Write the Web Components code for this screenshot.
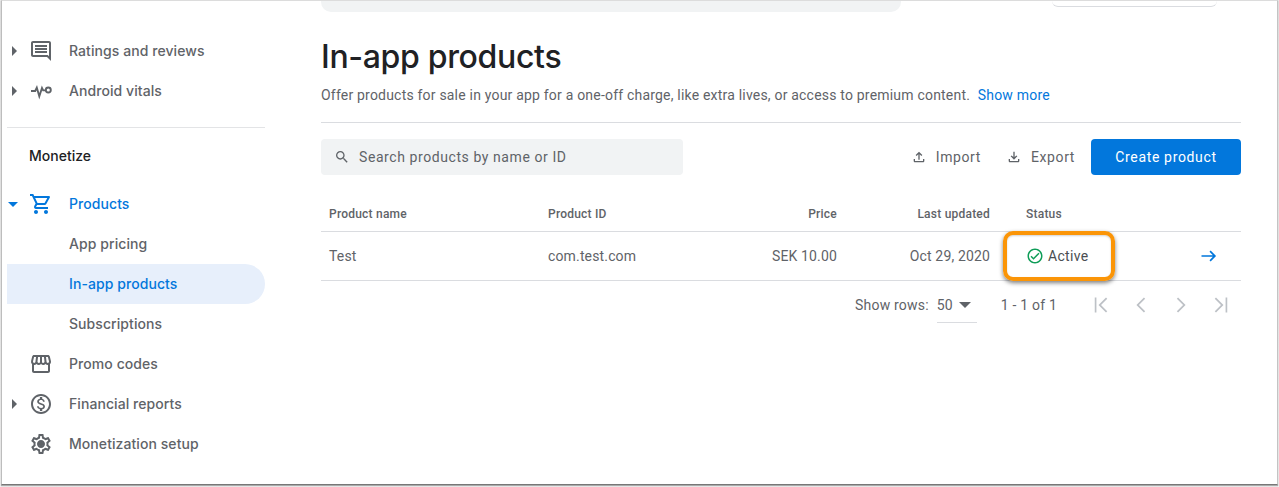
<!DOCTYPE html>
<html>
<head>
<meta charset="utf-8">
<title>In-app products</title>
<style>
    html, body { margin: 0; padding: 0; background: #fff; }
    body { width: 1279px; height: 487px; overflow: hidden; font-family: Roboto, "Liberation Sans", sans-serif; }
</style>
</head>
<body>
<app-window>
    <side-nav slot="nav">
        <nav-item caret="right" icon="comment">Ratings and reviews</nav-item>
        <nav-item caret="right" icon="vitals">Android vitals</nav-item>
        <nav-divider></nav-divider>
        <nav-heading>Monetize</nav-heading>
        <nav-item caret="down" icon="cart" active>Products</nav-item>
        <nav-item>App pricing</nav-item>
        <nav-item active selected>In-app products</nav-item>
        <nav-item>Subscriptions</nav-item>
        <nav-item icon="store">Promo codes</nav-item>
        <nav-item caret="right" icon="dollar">Financial reports</nav-item>
        <nav-item icon="gear">Monetization setup</nav-item>
    </side-nav>
    <products-page slot="main"></products-page>
</app-window>

<script>
// Iconos material, todos en una caja de 24x24
const ICONS = {
    comment: '<path d="M21.99 4c0-1.1-.89-2-1.99-2H4c-1.1 0-2 .9-2 2v12c0 1.1.9 2 2 2h14l4 4-.01-18zM20 4v13.17L18.83 16H4V4h16zM6 12h12v2H6zm0-3h12v2H6zm0-3h12v2H6z"/>',
    vitals: '<path d="M2 12h4.200l1.600-3.400 2.500 8.600 2.700-8.200 1.200 2.400h2" fill="none" stroke="currentColor" stroke-width="1.900"/><circle cx="19.300" cy="11" r="2.500" fill="none" stroke="currentColor" stroke-width="1.900"/>',
    cart: '<path d="M15.55 13c.75 0 1.41-.41 1.75-1.03l3.58-6.49c.37-.66-.11-1.48-.87-1.48H5.21l-.94-2H1v2h2l3.6 7.59-1.35 2.44C4.52 15.37 5.48 17 7 17h12v-2H7l1.1-2h7.45zM6.16 6h12.15l-2.76 5H8.53L6.16 6zM7 18c-1.1 0-1.99.9-1.99 2S5.9 22 7 22s2-.9 2-2-.9-2-2-2zm10 0c-1.1 0-1.99.9-1.99 2s.89 2 1.99 2 2-.9 2-2-.9-2-2-2z"/>',
    store: '<path d="M21.9 8.89l-1.05-4.37c-.22-.9-1-1.52-1.91-1.52H5.05c-.9 0-1.69.63-1.9 1.52L2.1 8.89c-.24 1.02-.02 2.06.62 2.88.08.11.19.19.28.29V19c0 1.1.9 2 2 2h14c1.1 0 2-.9 2-2v-6.94c.09-.09.2-.18.28-.28.64-.82.87-1.87.62-2.89zm-2.99-3.9l1.05 4.37c.1.42.01.84-.25 1.17-.14.18-.44.47-.94.47-.61 0-1.14-.49-1.21-1.14L16.98 5l1.93-.01zM13 5h1.96l.54 4.52c.05.39-.07.78-.33 1.07-.22.26-.54.41-.95.41-.67 0-1.22-.59-1.22-1.31V5zM8.49 9.52L9.04 5H11v4.69c0 .72-.55 1.31-1.29 1.31-.34 0-.65-.15-.89-.41-.25-.29-.37-.68-.33-1.07zm-4.45-.16L5.05 5h1.97l-.58 4.86c-.08.65-.6 1.14-1.21 1.14-.49 0-.8-.29-.93-.47-.27-.32-.36-.75-.26-1.17zM5 19v-6.03c.08.01.15.03.23.03.87 0 1.66-.36 2.24-.95.6.6 1.4.95 2.31.95.87 0 1.65-.36 2.23-.93.59.57 1.39.93 2.29.93.84 0 1.64-.35 2.24-.95.58.59 1.37.95 2.24.95.08 0 .15-.02.23-.03V19H5z"/>',
    dollar: '<path d="M12 2C6.48 2 2 6.48 2 12s4.48 10 10 10 10-4.48 10-10S17.52 2 12 2zm0 18c-4.41 0-8-3.59-8-8s3.59-8 8-8 8 3.59 8 8-3.59 8-8 8zm.31-8.86c-1.77-.45-2.34-.94-2.34-1.67 0-.84.79-1.43 2.1-1.43 1.38 0 1.9.66 1.94 1.64h1.71c-.05-1.34-.87-2.57-2.49-2.97V5H10.9v1.69c-1.51.32-2.72 1.3-2.72 2.81 0 1.79 1.49 2.69 3.66 3.21 1.95.46 2.34 1.15 2.34 1.87 0 .53-.39 1.39-2.1 1.39-1.6 0-2.23-.72-2.32-1.64H8.04c.1 1.7 1.36 2.66 2.86 2.97V19h2.34v-1.67c1.52-.29 2.72-1.16 2.73-2.77-.01-2.2-1.9-2.96-3.66-3.42z"/>',
    gear: '<path d="M19.43 12.98c.04-.32.07-.64.07-.98 0-.34-.03-.66-.07-.98l2.11-1.65c.19-.15.24-.42.12-.64l-2-3.46c-.09-.16-.26-.25-.44-.25-.06 0-.12.01-.17.03l-2.49 1c-.52-.4-1.08-.73-1.69-.98l-.38-2.65C14.46 2.18 14.25 2 14 2h-4c-.25 0-.46.18-.49.42l-.38 2.65c-.61.25-1.17.59-1.69.98l-2.49-1c-.06-.02-.12-.03-.18-.03-.17 0-.34.09-.43.25l-2 3.46c-.13.22-.07.49.12.64l2.11 1.65c-.04.32-.07.65-.07.98 0 .33.03.66.07.98l-2.11 1.65c-.19.15-.24.42-.12.64l2 3.46c.09.16.26.25.44.25.06 0 .12-.01.17-.03l2.49-1c.52.4 1.08.73 1.69.98l.38 2.65c.03.24.24.42.49.42h4c.25 0 .46-.18.49-.42l.38-2.65c.61-.25 1.17-.59 1.69-.98l2.49 1c.06.02.12.03.18.03.17 0 .34-.09.43-.25l2-3.46c.12-.22.07-.49-.12-.64l-2.11-1.65zm-1.98-1.71c.04.31.05.52.05.73 0 .21-.02.43-.05.73l-.14 1.13.89.7 1.08.84-.7 1.21-1.27-.51-1.04-.42-.9.68c-.43.32-.84.56-1.25.73l-1.06.43-.16 1.13-.2 1.35h-1.4l-.19-1.35-.16-1.13-1.06-.43c-.43-.18-.83-.41-1.23-.71l-.91-.7-1.06.43-1.27.51-.7-1.21 1.08-.84.89-.7-.14-1.13c-.03-.31-.05-.54-.05-.74s.02-.43.05-.73l.14-1.13-.89-.7-1.08-.84.7-1.21 1.27.51 1.04.42.9-.68c.43-.32.84-.56 1.25-.73l1.06-.43.16-1.13.2-1.35h1.39l.19 1.35.16 1.13 1.06.43c.43.18.83.41 1.23.71l.91.7 1.06-.43 1.27-.51.7 1.21-1.07.85-.89.7.14 1.13zM12 8c-2.21 0-4 1.79-4 4s1.79 4 4 4 4-1.79 4-4-1.79-4-4-4zm0 6c-1.1 0-2-.9-2-2s.9-2 2-2 2 .9 2 2-.9 2-2 2z"/><circle cx="12" cy="12" r="2.400"/>',
    search: '<path d="M15.5 14h-.79l-.28-.27C15.41 12.59 16 11.11 16 9.5 16 5.91 13.09 3 9.5 3S3 5.91 3 9.5 5.91 16 9.5 16c1.61 0 3.09-.59 4.23-1.57l.27.28v.79l5 4.99L20.49 19l-4.99-5zm-6 0C7.01 14 5 11.99 5 9.5S7.01 5 9.5 5 14 7.01 14 9.5 11.99 14 9.5 14z"/>',
    upload: '<path d="M18 15v3H6v-3H4v3c0 1.1.9 2 2 2h12c1.1 0 2-.9 2-2v-3h-2zM7 9l1.41 1.41L11 7.83V16h2V7.83l2.59 2.58L17 9l-5-5-5 5z"/>',
    download: '<path d="M18 15v3H6v-3H4v3c0 1.1.9 2 2 2h12c1.1 0 2-.9 2-2v-3h-2zm-1-4l-1.41-1.41L13 12.17V4h-2v8.17L8.41 9.59 7 11l5 5 5-5z"/>',
    check: '<path d="M12 2C6.48 2 2 6.48 2 12s4.48 10 10 10 10-4.48 10-10S17.52 2 12 2zm0 18c-4.41 0-8-3.59-8-8s3.59-8 8-8 8 3.59 8 8-3.59 8-8 8zm4.59-12.42L10 14.17l-2.59-2.58L6 13l4 4 8-8-1.41-1.42z"/>',
    arrow: '<path d="M14 5.5l-1.41 1.41L16.67 11H3v2h13.67l-4.08 4.09L14 18.5l6.5-6.5z"/>',
    first: '<path d="M4.500 3h2v18h-2zM19.500 4.400L18 3l-9 9 9 9 1.500-1.400L12 12z"/>',
    prev: '<path d="M17 4.400L15.500 3l-9 9 9 9 1.500-1.400L9.500 12z"/>',
    next: '<path d="M7 4.400L8.500 3l9 9-9 9L7 19.600 14.500 12z"/>',
    last: '<path d="M17.500 3h2v18h-2zM4.500 4.400L6 3l9 9-9 9-1.500-1.400L12 12z"/>'
};

class UiIcon extends HTMLElement {
    constructor() {
        super();
        this.attachShadow({ mode: 'open' });
    }

    connectedCallback() {
        const size = this.getAttribute('size') || 24;
        const name = this.getAttribute('name');
        this.shadowRoot.innerHTML = `
            <style>
                :host { display: inline-flex; flex: none; width: ${size}px; height: ${size}px; }
                svg { display: block; width: 100%; height: 100%; fill: currentColor; }
            </style>
            <svg viewBox="0 0 24 24" aria-hidden="true">${ICONS[name] || ''}</svg>
        `;
    }
}

class AppWindow extends HTMLElement {
    constructor() {
        super();
        this.attachShadow({ mode: 'open' });
        this.shadowRoot.innerHTML = `
            <style>
                :host {
                    display: block;
                    box-sizing: border-box;
                    width: 1279px;
                    height: 487px;
                    padding: 0 1px 2px 1px;
                    background: linear-gradient(#e9e9e9, #f4f4f4);
                }
                .frame {
                    box-sizing: border-box;
                    height: 100%;
                    display: flex;
                    overflow: hidden;
                    background: #fff;
                    border-style: solid;
                    border-color: #dcdcdc #c4c4c4 #777 #bdbdbd;
                    border-width: 1px;
                    box-shadow: 0 1px 1px rgba(0, 0, 0, .3);
                }
            </style>
            <div class="frame">
                <slot name="nav"></slot>
                <slot name="main"></slot>
            </div>
        `;
    }
}

class SideNav extends HTMLElement {
    constructor() {
        super();
        this.attachShadow({ mode: 'open' });
        this.shadowRoot.innerHTML = `
            <style>
                :host {
                    display: block;
                    flex: none;
                    box-sizing: border-box;
                    width: 258px;
                    margin-left: 5px;
                    padding-top: 30px;
                }
            </style>
            <slot></slot>
        `;
    }
}

class NavItem extends HTMLElement {
    constructor() {
        super();
        this.attachShadow({ mode: 'open' });
    }

    connectedCallback() {
        const caret = this.getAttribute('caret');
        const icon = this.getAttribute('icon');
        const caretSvg = caret === 'down'
            ? '<svg class="down" width="10" height="5" viewBox="0 0 10 5"><path d="M0 0h10L5 5z"/></svg>'
            : caret === 'right'
                ? '<svg width="5" height="10" viewBox="0 0 5 10"><path d="M0 0l5 5-5 5z"/></svg>'
                : '';

        this.shadowRoot.innerHTML = `
            <style>
                :host {
                    display: flex;
                    align-items: center;
                    height: 40px;
                    color: #5f6368;
                    font: 500 14px/20px Inter, Roboto, sans-serif;
                    letter-spacing: .07px;
                    border-radius: 0 20px 20px 0;
                }
                :host([active]) { color: #0277dc; }
                :host([selected]) { background: #e7effb; }
                .caret {
                    flex: none;
                    display: flex;
                    align-items: center;
                    justify-content: center;
                    width: 14px;
                    color: #5f6368;
                }
                :host([active]) .caret { color: #0277dc; }
                .caret svg { display: block; fill: currentColor; }
                .caret .down { margin-left: -2px; }
                .icon {
                    flex: none;
                    display: flex;
                    justify-content: center;
                    width: 24px;
                    margin: 0 16px 0 8px;
                }
            </style>
            <span class="caret">${caretSvg}</span>
            <span class="icon">${icon ? `<ui-icon name="${icon}"></ui-icon>` : ''}</span>
            <slot></slot>
        `;
    }
}

class NavDivider extends HTMLElement {
    constructor() {
        super();
        this.attachShadow({ mode: 'open' });
        this.shadowRoot.innerHTML = `
            <style>
                :host { display: block; height: 1px; margin-top: 16px; background: #e3e4e6; }
            </style>
        `;
    }
}

class NavHeading extends HTMLElement {
    constructor() {
        super();
        this.attachShadow({ mode: 'open' });
        this.shadowRoot.innerHTML = `
            <style>
                :host {
                    display: flex;
                    align-items: center;
                    height: 56px;
                    padding-left: 22px;
                    color: #202124;
                    font: 500 14px/20px Inter, Roboto, sans-serif;
                }
            </style>
            <slot></slot>
        `;
    }
}

class ToolButton extends HTMLElement {
    constructor() {
        super();
        this.attachShadow({ mode: 'open' });
    }

    connectedCallback() {
        this.shadowRoot.innerHTML = `
            <style>
                :host {
                    display: inline-flex;
                    align-items: center;
                    gap: 9px;
                    color: #5f6368;
                    font: 400 14px/20px Roboto, sans-serif;
                    letter-spacing: .6px;
                }
            </style>
            <ui-icon name="${this.getAttribute('icon')}" size="16"></ui-icon>
            <slot></slot>
        `;
    }
}

class ProductsPage extends HTMLElement {
    constructor() {
        super();
        this.attachShadow({ mode: 'open' });
    }

    connectedCallback() {
        this.shadowRoot.innerHTML = `
            <style>
                :host {
                    display: block;
                    flex: none;
                    box-sizing: border-box;
                    width: 920px;
                    margin-left: 56px;
                    color: #5f6368;
                    font: 400 14px/20px Roboto, sans-serif;
                    letter-spacing: .2px;
                }
                .stub { display: flex; justify-content: space-between; height: 11px; }
                .stub-search { width: 580px; background: #f1f3f4; border-radius: 0 0 10px 10px; }
                .stub-box {
                    box-sizing: border-box;
                    width: 165px;
                    height: 6px;
                    margin-right: 24px;
                    border-bottom: 1px solid #dadce0;
                    border-radius: 0 0 6px 6px;
                }
                h1 {
                    margin: 23px 0 0;
                    color: #202124;
                    font: 500 32px/44px Inter, Roboto, sans-serif;
                    letter-spacing: -.33px;
                }
                .intro { margin: 6px 0 0; height: 20px; }
                .intro a { margin-left: 4px; color: #0277dc; text-decoration: none; }
                .rule { height: 1px; margin-top: 17px; background: #dadce0; }
                .toolbar { display: flex; align-items: center; height: 36px; margin-top: 16px; }
                .search {
                    flex: none;
                    display: flex;
                    align-items: center;
                    gap: 9px;
                    box-sizing: border-box;
                    width: 362px;
                    height: 36px;
                    padding-left: 13px;
                    background: #f1f3f4;
                    border-radius: 4px;
                    letter-spacing: .58px;
                }
                .actions { display: flex; align-items: center; margin-left: auto; }
                .actions tool-button + tool-button { margin-left: 25px; }
                .create {
                    display: flex;
                    align-items: center;
                    justify-content: center;
                    width: 150px;
                    height: 36px;
                    margin-left: 16px;
                    color: #fff;
                    background: #0277dc;
                    border-radius: 4px;
                    letter-spacing: .65px;
                }
                .row {
                    display: grid;
                    grid-template-columns: 219px 190px 115px 153px 172px 71px;
                    align-items: center;
                }
                .row > * { padding: 0 8px; }
                .num { text-align: right; }
                .head {
                    box-sizing: border-box;
                    height: 37px;
                    margin-top: 20px;
                    padding-top: 1px;
                    font-size: 12px;
                    font-weight: 500;
                    letter-spacing: .22px;
                    border-bottom: 1px solid #dadce0;
                }
                .body { height: 48px; border-bottom: 1px solid #dadce0; letter-spacing: .15px; }
                .head .status, .body .status { padding-left: 28px; }
                .body .go { display: flex; justify-content: flex-end; padding: 0 22px 0 0; color: #0277dc; }
                .active {
                    position: relative;
                    align-self: stretch;
                    display: flex;
                    align-items: center;
                    gap: 4px;
                    color: #4a4e52;
                    letter-spacing: .3px;
                }
                .active ui-icon { color: #0f9d58; }
                .callout {
                    position: absolute;
                    left: 5px;
                    top: -1px;
                    box-sizing: border-box;
                    width: 112px;
                    height: 50px;
                    border: 4px solid #fb9507;
                    border-radius: 10px;
                    box-shadow: 0 2px 4px rgba(0, 0, 0, .5), inset 0 1px 2px rgba(0, 0, 0, .18);
                }
                .pager { display: flex; align-items: center; justify-content: flex-end; height: 48px; }
                .select {
                    display: flex;
                    align-items: center;
                    width: 40px;
                    height: 36px;
                    margin-left: 8px;
                    border-bottom: 1px solid #dadce0;
                    box-sizing: border-box;
                }
                .select svg { margin-left: 6px; fill: #5f6368; }
                .range { margin: 0 24px 0 24px; }
                .nav-btn {
                    display: flex;
                    justify-content: center;
                    width: 40px;
                    color: #bdc1c6;
                }
            </style>
            <div class="stub"><div class="stub-search"></div><div class="stub-box"></div></div>
            <h1>In-app products</h1>
            <p class="intro">Offer products for sale in your app for a one-off charge, like extra lives, or access to premium content. <a>Show more</a></p>
            <div class="rule"></div>
            <div class="toolbar">
                <div class="search"><ui-icon name="search" size="16"></ui-icon><span>Search products by name or ID</span></div>
                <div class="actions">
                    <tool-button icon="upload">Import</tool-button>
                    <tool-button icon="download">Export</tool-button>
                    <div class="create">Create product</div>
                </div>
            </div>
            <div class="row head">
                <span>Product name</span><span>Product ID</span><span class="num">Price</span>
                <span class="num">Last updated</span><span class="status">Status</span><span></span>
            </div>
            <div class="row body">
                <span>Test</span><span>com.test.com</span><span class="num">SEK 10.00</span>
                <span class="num">Oct 29, 2020</span>
                <span class="status active"><ui-icon name="check" size="18"></ui-icon>Active<i class="callout"></i></span>
                <span class="go"><ui-icon name="arrow" size="20"></ui-icon></span>
            </div>
            <div class="pager">
                <span>Show rows:</span>
                <div class="select"><span>50</span><svg width="12" height="6" viewBox="0 0 12 6"><path d="M0 0h12L6 6z"/></svg></div>
                <span class="range">1 - 1 of 1</span>
                <span class="nav-btn"><ui-icon name="first" size="20"></ui-icon></span>
                <span class="nav-btn"><ui-icon name="prev" size="20"></ui-icon></span>
                <span class="nav-btn"><ui-icon name="next" size="20"></ui-icon></span>
                <span class="nav-btn"><ui-icon name="last" size="20"></ui-icon></span>
            </div>
        `;
    }
}

customElements.define('ui-icon', UiIcon);
customElements.define('app-window', AppWindow);
customElements.define('side-nav', SideNav);
customElements.define('nav-item', NavItem);
customElements.define('nav-divider', NavDivider);
customElements.define('nav-heading', NavHeading);
customElements.define('tool-button', ToolButton);
customElements.define('products-page', ProductsPage);
</script>
</body>
</html>
